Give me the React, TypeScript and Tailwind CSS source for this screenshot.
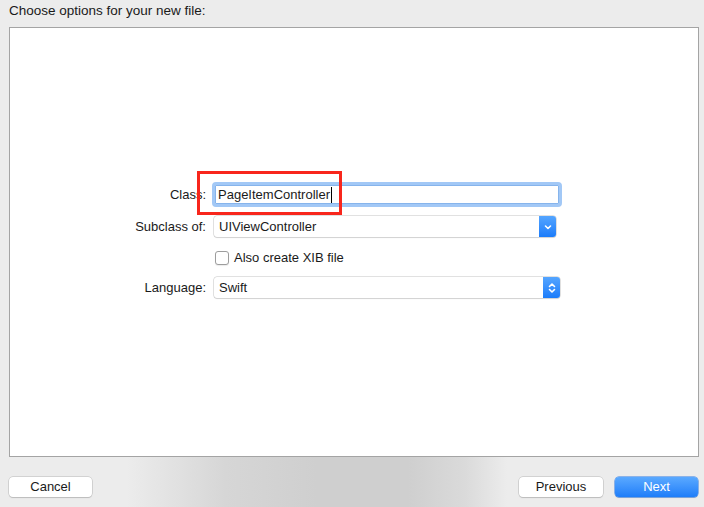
import React from "react";

const font = { fontFamily: '"Liberation Sans", Arial, sans-serif' };

function Chevron({ double }: { double?: boolean }) {
  return (
    <svg width="10" height="14" viewBox="0 0 10 14" fill="none" stroke="white" strokeWidth="1.6" strokeLinecap="round" strokeLinejoin="round">
      {double ? (
        <>
          <path d="M2.5 5.5 L5 3 L7.5 5.5" />
          <path d="M2.5 8.5 L5 11 L7.5 8.5" />
        </>
      ) : (
        <path d="M2.5 6 L5 8.5 L7.5 6" />
      )}
    </svg>
  );
}

function Popup({ value, double, width }: { value: string; double?: boolean; width: string }) {
  return (
    <div className={`flex h-[21px] ${width} rounded-[3px] bg-white shadow-[0_0_0_0.5px_#c4c4c4,0_1px_1px_rgba(0,0,0,0.12)]`}>
      <div className="flex-1 pl-[5px] text-[13px] leading-[21px] text-[#1a1a1a]">{value}</div>
      <div className="flex w-[17px] items-center justify-center rounded-r-[3px] bg-gradient-to-b from-[#54a5ff] to-[#1a7cfa]">
        <Chevron double={double} />
      </div>
    </div>
  );
}

export default function App() {
  return (
    <div className="flex h-[507px] w-[704px] flex-col bg-[#ececec] text-[13px] text-[#1a1a1a]" style={font}>
      {/* title */}
      <div className="h-[27px] pl-[9px] pt-[3px] text-[13.5px] leading-[16px]">Choose options for your new file:</div>

      {/* options panel */}
      <div className="relative mx-[9px] h-[430px] w-[690px] border border-[#a4a4a4] bg-white">
        <div className="flex flex-col pt-[154px]">
          {/* class */}
          <div className="flex items-center">
            <div className="w-[197px] pr-[1px] text-right">Class:</div>
            <div className="ml-[5px] flex h-[25px] w-[350px] items-center rounded-[4px] border-[3px] border-[#a2c8f6] bg-white pl-[3px] shadow-[inset_0_0_0_1px_#86b4ec]">
              <span className="leading-[18px]">PageItemController</span>
              <span className="ml-[1px] h-[16px] w-[1px] bg-black" />
            </div>
          </div>

          {/* subclass */}
          <div className="mt-[9px] flex items-center">
            <div className="w-[197px] pr-[1px] text-right">Subclass of:</div>
            <div className="ml-[7px]">
              <Popup value="UIViewController" width="w-[342px]" />
            </div>
          </div>

          {/* checkbox */}
          <div className="mt-[14px] flex items-center pl-[205px]">
            <div className="h-[14px] w-[14px] rounded-[3px] border border-[#9d9d9d] bg-white shadow-[0_1px_1px_rgba(0,0,0,0.08)]" />
            <span className="ml-[5px] leading-[14px]">Also create XIB file</span>
          </div>

          {/* language */}
          <div className="mt-[12px] flex items-center">
            <div className="w-[197px] pr-[1px] text-right">Language:</div>
            <div className="ml-[7px]">
              <Popup value="Swift" double width="w-[346px]" />
            </div>
          </div>
        </div>

        {/* red annotation box */}
        <div className="absolute left-[187px] top-[143px] h-[44px] w-[145px] border-[3px] border-[#f8261c]" />
      </div>

      {/* bottom bar */}
      <div className="flex flex-1 items-start justify-between bg-[linear-gradient(to_right,#ececec_0%,#ececec_18%,#d6d6d6_32%,#cfcfcf_45%,#cfcfcf_58%,#dadada_66%,#ececec_72%,#ececec_100%)] pl-[9px] pr-[6px] pt-[20px]">
        <button className="h-[20px] w-[83px] rounded-[4px] bg-white text-[13px] leading-[20px] shadow-[0_0_0_0.5px_#b8b8b8,0_1px_1px_rgba(0,0,0,0.18)]">
          Cancel
        </button>
        <div className="flex gap-[12px]">
          <button className="h-[20px] w-[84px] rounded-[4px] bg-white text-[13px] leading-[20px] shadow-[0_0_0_0.5px_#b8b8b8,0_1px_1px_rgba(0,0,0,0.18)]">
            Previous
          </button>
          <button className="h-[20px] w-[83px] rounded-[4px] bg-gradient-to-b from-[#5aa9ff] to-[#1d7df9] text-[13px] leading-[20px] text-white shadow-[0_0_0_0.5px_#2a78e4,0_1px_1px_rgba(0,0,0,0.15)]">
            Next
          </button>
        </div>
      </div>
    </div>
  );
}
